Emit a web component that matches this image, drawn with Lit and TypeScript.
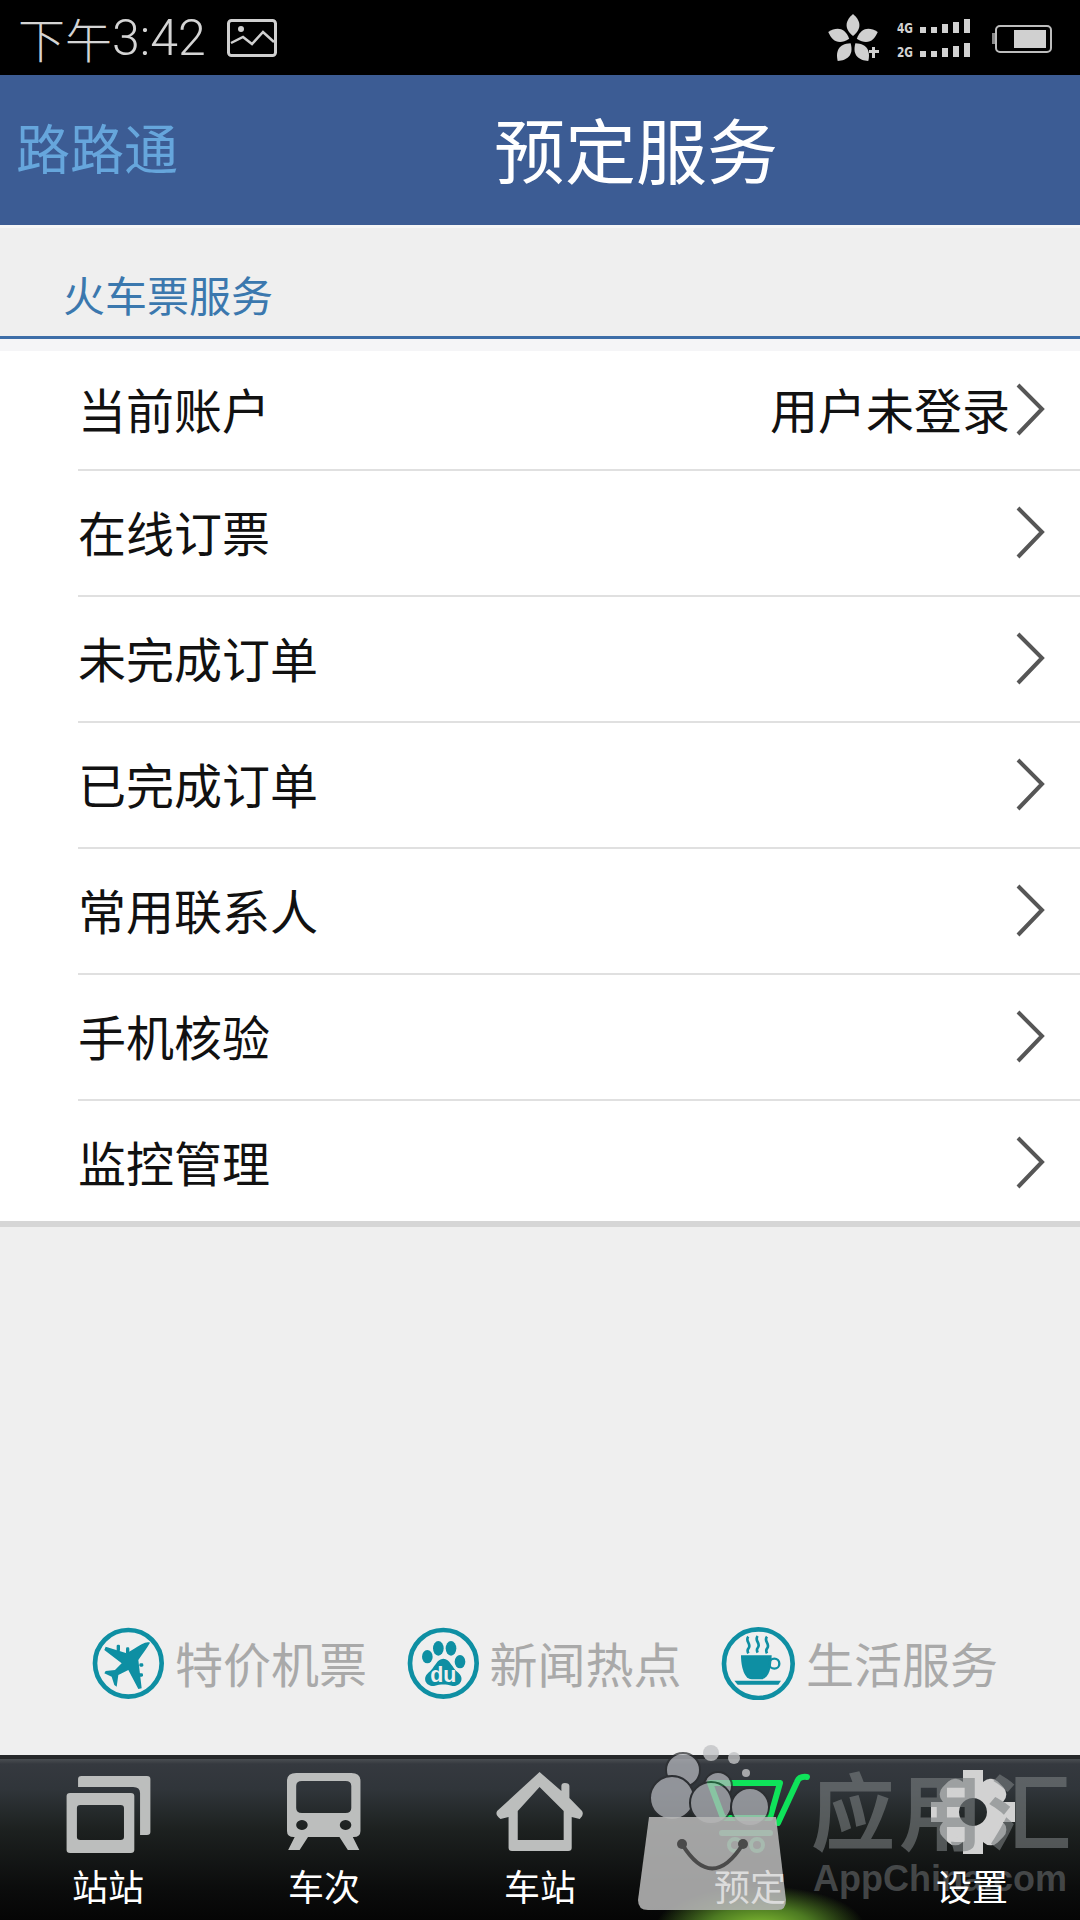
import { LitElement, html, css, svg } from "lit";
import { customElement } from "lit/decorators.js";

const rows = [
  ["当前账户", "用户未登录"],
  ["在线订票", ""],
  ["未完成订单", ""],
  ["已完成订单", ""],
  ["常用联系人", ""],
  ["手机核验", ""],
  ["监控管理", ""],
];

const chevron = html`<svg class="chev" width="30" height="54" viewBox="0 0 30 54"><path d="M3 2 L27 26 L3 51" fill="none" stroke="#565656" stroke-width="4"/></svg>`;

const petal = (a: number) => svg`<path transform="rotate(${a} 853 40)" d="M853 36 C843 28 846 20 853 14 C860 20 863 28 853 36Z" fill="#d0d0d0"/>`;

const statusRight = html`<svg class="status-svg" width="1080" height="75" viewBox="0 0 1080 75">
  ${[0, 72, 144, 216, 288].map(petal)}
  <path d="M869 50 h3 v-3 h3 v3 h4 v3 h-4 v5 h-3 v-5 h-3z" fill="#d0d0d0"/>
  <text x="897" y="33" class="net" textLength="16" lengthAdjust="spacingAndGlyphs">4G</text>
  <text x="897" y="57" class="net" textLength="16" lengthAdjust="spacingAndGlyphs">2G</text>
  ${[[920, 6], [931, 6], [942, 9], [953, 11], [964, 14]].map(([x, h]) => svg`
    <rect x=${x} y=${33 - h} width="6" height=${h} fill="#d2d2d2"/>
    <rect x=${x} y=${57 - h} width="6" height=${h} fill="#d2d2d2"/>`)}
  <rect x="996" y="26" width="55" height="26" rx="4" fill="none" stroke="#bdbdbd" stroke-width="2"/>
  <rect x="992" y="33" width="3" height="11" fill="#8a8a8a"/>
  <rect x="1014" y="30" width="32" height="18" fill="#d0d0d0"/>
  <rect x="228.500" y="20.500" width="47" height="35" rx="3" fill="none" stroke="#cfcfcf" stroke-width="3"/>
  <circle cx="241" cy="29" r="3" fill="#cfcfcf"/>
  <path d="M231 43 L243 37 L252 44 L263 32 L274 42" fill="none" stroke="#cfcfcf" stroke-width="2.500"/>
</svg>`;

const planeIcon = html`<svg width="72" height="72" viewBox="21 21 216 216">
  <circle cx="130" cy="130" r="100" fill="none" stroke="#0e8fa3" stroke-width="14"/>
  <path fill="#0e8fa3" d="M195 68 C185 85 170 105 160 120 L170 205 L160 207 L130 150 L100 165 L95 200 L88 195 L80 170 L58 160 L62 153 L90 150 L110 130 L58 90 L62 80 L125 100 L150 85 C165 75 185 62 195 68Z"/>
  <g fill="#0e8fa3"><rect x="95" y="74" width="10" height="20" rx="4"/><rect x="123" y="82" width="10" height="20" rx="4"/><rect x="163" y="130" width="12" height="10" rx="4"/><rect x="160" y="160" width="14" height="10" rx="4"/></g>
</svg>`;

const duIcon = html`<svg width="72" height="72" viewBox="21 21 216 216">
  <circle cx="130" cy="130" r="100" fill="none" stroke="#0e8fa3" stroke-width="14"/>
  <ellipse cx="115" cy="85" rx="16" ry="22" fill="#0e8fa3"/>
  <ellipse cx="153" cy="85" rx="16" ry="22" fill="#0e8fa3"/>
  <ellipse cx="82" cy="110" rx="16" ry="20" fill="#0e8fa3"/>
  <ellipse cx="180" cy="125" rx="16" ry="20" fill="#0e8fa3"/>
  <path d="M130 116 C150 116 155 143 175 158 C197 178 177 202 155 197 C140 192 120 192 105 197 C83 202 63 178 85 158 C105 143 110 116 130 116Z" fill="#0e8fa3"/>
  <text x="130" y="187" text-anchor="middle" class="du">du</text>
</svg>`;

const cupIcon = html`<svg width="74" height="74" viewBox="18 12 222 222">
  <circle cx="130" cy="125" r="103" fill="none" stroke="#0e8fa3" stroke-width="14"/>
  <path d="M100 44 c-12 14 12 22 0 36 c-4 5 -2 10 0 14 M128 42 c-12 14 12 22 0 36 c-4 5 -2 10 0 14 M156 44 c-12 14 12 22 0 36 c-4 5 -2 10 0 14" fill="none" stroke="#0e8fa3" stroke-width="8"/>
  <path d="M78 100 H170 C170 135 162 172 138 172 H110 C88 172 78 135 78 100Z" fill="#0e8fa3"/>
  <circle cx="178" cy="125" r="15" fill="none" stroke="#0e8fa3" stroke-width="7"/>
  <path d="M58 176 H198 L190 188 H68Z" fill="#0e8fa3"/>
</svg>`;

const gray = "#bcbebd";
const navIcons = [
  html`<svg width="100" height="84" viewBox="58 1770 100 84"><g transform="scale(1.148 1)"><path fill-rule="evenodd" fill=${gray} d="M61 1793 H114 Q117 1793 117 1796 V1850 Q117 1853 114 1853 H61 Q58 1853 58 1850 V1796 Q58 1793 61 1793Z M70 1805 Q67 1805 67 1808 V1837 Q67 1840 70 1840 H105 Q108 1840 108 1837 V1808 Q108 1805 105 1805Z"/><path fill=${gray} d="M71 1776 H128 Q131 1776 131 1779 V1832 Q131 1835 128 1835 H122 V1793 Q122 1787 116 1787 H68 V1779 Q68 1776 71 1776Z"/></g></svg>`,
  html`<svg width="100" height="84" viewBox="274 1770 100 84"><g transform="scale(1.148 1)"><path fill-rule="evenodd" fill=${gray} d="M258 1773 H306 Q314 1773 314 1781 V1831 Q314 1837 308 1837 H256 Q250 1837 250 1831 V1781 Q250 1773 258 1773Z M263 1781 Q258 1781 258 1786 V1808 Q258 1813 263 1813 H301 Q306 1813 306 1808 V1786 Q306 1781 301 1781Z M263 1820 a5 5 0 1 0 .01 0Z M301 1820 a5 5 0 1 0 .01 0Z" /><path fill=${gray} d="M258 1834 H270 L261 1850 H251Z M294 1834 H306 L313 1850 H303Z"/></g></svg>`,
  html`<svg width="100" height="84" viewBox="490 1770 100 84"><g transform="scale(1.148 1)"><path fill-rule="evenodd" fill=${gray} d="M470 1772 L489 1791 V1786 Q489 1783 492 1783 Q496 1783 496 1786 V1798 L507 1811 Q509 1815 505 1819 L498 1817 V1848 Q498 1851 495 1851 H446 Q443 1851 443 1848 V1817 L436 1819 Q431 1815 433 1811Z M470 1787 L451 1811 V1840 H491 V1811Z"/></g></svg>`,
  html`<svg width="100" height="84" viewBox="700 1770 100 84"><path d="M807 1777 Q799 1776 797 1782 L778 1823 M780 1783 H710 L723 1818 H770 L780 1783" fill="none" stroke="#0fe35a" stroke-width="6" stroke-linecap="round" stroke-linejoin="round"/><path d="M722 1833 H770" stroke="#3ad27a" stroke-width="6" stroke-linecap="round"/><circle cx="735" cy="1845" r="6" fill="none" stroke="#3ad27a" stroke-width="4"/><circle cx="757" cy="1845" r="6" fill="none" stroke="#3ad27a" stroke-width="4"/></svg>`,
  html`<svg width="100" height="84" viewBox="922 1770 100 84"><g fill="#d2d2d2">${[0, 90, 180, 270].map((a) => svg`<rect transform="rotate(${a} 973 1812)" x="963" y="1770" width="20" height="20"/>`)}${[45, 135, 225, 315].map((a) => svg`<rect transform="rotate(${a} 973 1812)" x="959" y="1773" width="28" height="24" rx="10"/>`)}<path fill-rule="evenodd" d="M973 1782 a30 30 0 1 0 .01 0Z M973 1798 a14 14 0 1 1 -.01 0Z"/></g></svg>`,
];
const navLabels = ["站站", "车次", "车站", "预定", "设置"];

const watermark = html`<div class="wm">
  <svg class="wm-art" width="1080" height="200" viewBox="0 1720 1080 200">
    <defs><radialGradient id="glow" cx="0.5" cy="0.5" r="0.5"><stop offset="0" stop-color="#86c233"/><stop offset="0.5" stop-color="#4d7a22"/><stop offset="1" stop-color="#4d7a22" stop-opacity="0"/></radialGradient></defs>
    <ellipse cx="760" cy="1928" rx="105" ry="42" fill="url(#glow)"/>
    <g fill="#b7b9bf" stroke="#2b2d30" stroke-width="2" opacity="0.72">
      <circle cx="683" cy="1770" r="17"/>
      <circle cx="718" cy="1786" r="14"/>
      <circle cx="672" cy="1798" r="22"/>
      <circle cx="711" cy="1803" r="21"/>
      <circle cx="750" cy="1807" r="19"/>
    </g>
    <g fill="#c3c4c6" opacity="0.8"><circle cx="711" cy="1753" r="8"/><circle cx="734" cy="1758" r="6"/><circle cx="746" cy="1773" r="4"/></g>
    <path d="M649 1817 H776 L786 1900 Q786 1910 778 1910 H648 Q638 1910 638 1900Z" fill="#b6b6b6" fill-opacity="0.88"/>
    <path d="M682 1844 Q712 1893 743 1844" fill="none" stroke="#4a4a4a" stroke-width="4"/>
    <circle cx="682" cy="1844" r="5" fill="#4a4a4a"/><circle cx="743" cy="1844" r="5" fill="#4a4a4a"/>
  </svg>
  <div class="wm-cn"><span>应</span><span>用</span><span>汇</span></div>
  <div class="wm-en">AppChina.com</div>
</div>`;

@customElement("app-root")
export class AppRoot extends LitElement {
  static styles = css`
    :host { display: block; width: 1080px; height: 1920px; position: relative; overflow: hidden;
      font-family: "Noto Sans CJK SC", "Liberation Sans", sans-serif; background: #efefef; }
    .page { display: flex; flex-direction: column; height: 1920px; }
    .status { height: 75px; flex: none; background: #000; position: relative; display: flex; align-items: center; box-sizing: border-box; padding-left: 18px; }
    .status-svg { position: absolute; left: 0; top: 0; }
    .net { font: bold 14px "DejaVu Sans", sans-serif; fill: #d2d2d2; }
    .time { display: flex; align-items: center; font-size: 47px; font-weight: 300; color: #d4d4d4; line-height: 75px; height: 75px; }
    .time b { font: 300 50px Roboto, sans-serif; }
    .header { height: 153px; box-sizing: border-box; flex: none; background: #3c5c94; border-bottom: 3px solid #f6f6f6; display: flex; align-items: center; padding: 0 0 6px 16px; }
    .logo { font-size: 54px; color: #66a6dc; flex: none; white-space: nowrap; line-height: 1; }
    .title { font-size: 71px; color: #fff; margin-left: 316px; line-height: 1; white-space: nowrap; }
    .section { height: 111px; box-sizing: border-box; flex: none; border-bottom: 3px solid #3e6ea8; padding: 36px 0 0 63px; font-size: 42px; line-height: 60px; color: #3b78ae; }
    .gap { height: 12px; flex: none; background: #f5f5f7; }
    .list { background: #fff; flex: none; border-bottom: 6px solid #d6d6d6; }
    .row { height: 126px; box-sizing: border-box; margin-left: 78px; padding: 0 35px 0 0; border-bottom: 2px solid #e0e0e0; display: flex; align-items: center; font-size: 48px; color: #111; }
    .row:first-child { height: 120px; }
    .row:last-child { height: 120px; border-bottom: 0; padding-top: 4px; }
    .name { flex: 1; line-height: 1; margin-top: -5px; }
    .val { line-height: 1; margin: -5px 5px 0 0; }
    .chev { flex: none; display: block; }
    .spacer { flex: 1; }
    .links { flex: none; display: flex; align-items: center; gap: 39.500px; padding: 0 0 0 92px; height: 72px; margin-bottom: 56px; }
    .link { display: flex; align-items: center; gap: 11px; font-size: 48px; color: #a9a9a9; line-height: 1; margin-top: -3px; }
    .link svg { flex: none; display: block; margin-top: 3px; }
    .du { font: bold 64px "Liberation Sans", sans-serif; fill: #efefef; }
    .nav { height: 165px; flex: none; box-sizing: border-box; display: grid; grid-template-columns: repeat(5, 216px); border-top: 4px solid #26282a;
      background: linear-gradient(#4a4e52 0, #35393f 5px, #30353a 30px, #1d2120 70px, #0b0c0c 130px, #050505 100%); }
    .item { display: flex; flex-direction: column; align-items: center; padding-top: 11px; box-sizing: border-box; color: #fff; font-size: 36px; }
    .item:nth-child(4) { padding-right: 12px; }
    .item svg { display: block; overflow: visible; }
    .item span { line-height: 40px; margin-top: 11px; position: relative; z-index: 2; }
    .item:nth-child(4) span { color: #dcdcdc; }
    .wm { position: absolute; left: 0; top: 1720px; width: 1080px; height: 200px; pointer-events: none; }
    .wm-art { position: absolute; left: 0; top: 0; }
    .wm-cn { position: absolute; left: 811px; top: 46px; display: flex; gap: 4px; font-size: 84px; font-weight: 700; line-height: 84px; color: rgba(122,126,128,.6); }
    .wm-en { position: absolute; left: 813px; top: 134px; font: bold 36px/50px "Liberation Sans", sans-serif; color: rgba(122,126,128,.5); white-space: nowrap; }
  `;

  render() {
    return html`<div class="page">
      <div class="status">${statusRight}<div class="time">下午<b>3:42</b></div></div>
      <div class="header"><div class="logo">路路通</div><div class="title">预定服务</div></div>
      <div class="section">火车票服务</div>
      <div class="gap"></div>
      <div class="list">
        ${rows.map(([n, v]) => html`<div class="row"><div class="name">${n}</div>${v ? html`<div class="val">${v}</div>` : ""}${chevron}</div>`)}
      </div>
      <div class="spacer"></div>
      <div class="links">
        <div class="link">${planeIcon}特价机票</div>
        <div class="link">${duIcon}新闻热点</div>
        <div class="link">${cupIcon}生活服务</div>
      </div>
      <div class="nav">
        ${navLabels.map((l, i) => html`<div class="item">${navIcons[i]}<span>${l}</span></div>`)}
      </div>
    </div>
    ${watermark}`;
  }
}
